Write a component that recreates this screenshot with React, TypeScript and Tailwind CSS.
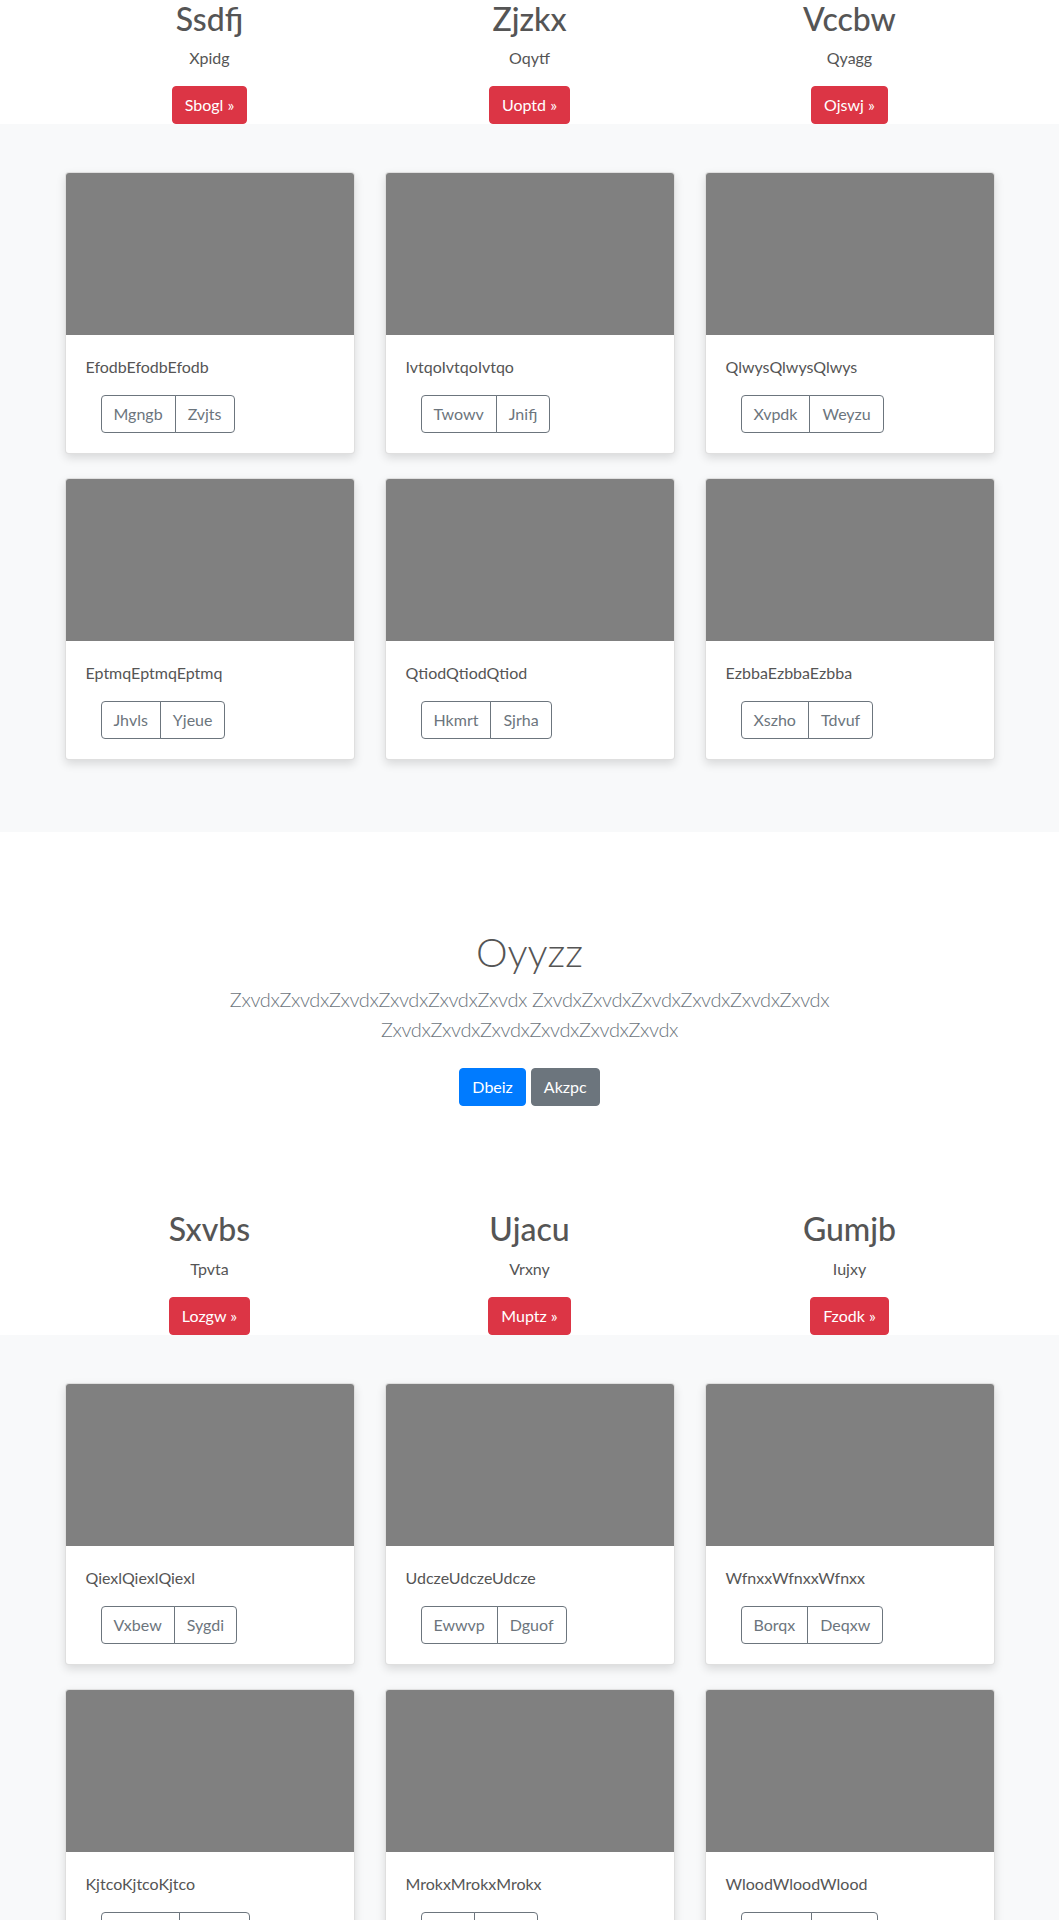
import React from 'react'

type Feature = { title: string; text: string; cta: string }
type Card = { text: string; buttons: [string, string] }

const topFeatures: Feature[] = [
  { title: 'Ssdfj', text: 'Xpidg', cta: 'Sbogl' },
  { title: 'Zjzkx', text: 'Oqytf', cta: 'Uoptd' },
  { title: 'Vccbw', text: 'Qyagg', cta: 'Ojswj' },
]

const bottomFeatures: Feature[] = [
  { title: 'Sxvbs', text: 'Tpvta', cta: 'Lozgw' },
  { title: 'Ujacu', text: 'Vrxny', cta: 'Muptz' },
  { title: 'Gumjb', text: 'Iujxy', cta: 'Fzodk' },
]

const topCards: Card[] = [
  { text: 'EfodbEfodbEfodb', buttons: ['Mgngb', 'Zvjts'] },
  { text: 'IvtqoIvtqoIvtqo', buttons: ['Twowv', 'Jnifj'] },
  { text: 'QlwysQlwysQlwys', buttons: ['Xvpdk', 'Weyzu'] },
  { text: 'EptmqEptmqEptmq', buttons: ['Jhvls', 'Yjeue'] },
  { text: 'QtiodQtiodQtiod', buttons: ['Hkmrt', 'Sjrha'] },
  { text: 'EzbbaEzbbaEzbba', buttons: ['Xszho', 'Tdvuf'] },
]

const bottomCards: Card[] = [
  { text: 'QiexlQiexlQiexl', buttons: ['Vxbew', 'Sygdi'] },
  { text: 'UdczeUdczeUdcze', buttons: ['Ewwvp', 'Dguof'] },
  { text: 'WfnxxWfnxxWfnxx', buttons: ['Borqx', 'Deqxw'] },
  { text: 'KjtcoKjtcoKjtco', buttons: ['Mqwvb', 'Hdzne'] },
  { text: 'MrokxMrokxMrokx', buttons: ['Tlijc', 'Pxsra'] },
  { text: 'WloodWloodWlood', buttons: ['Nvoxu', 'Bkrqa'] },
]

function Marketing({ items }: { items: Feature[] }) {
  return (
    <div className="w-[960px] mx-auto grid grid-cols-3">
      {items.map((f) => (
        <div key={f.title} className="px-[15px] text-center">
          <h2 className="text-[32px] font-medium leading-[1.2] mb-2">{f.title}</h2>
          <p className="mb-4">{f.text}</p>
          <a className="inline-block bg-[#dc3545] text-white rounded px-3 py-1.5 leading-6 border border-[#dc3545]">
            {f.cta} &raquo;
          </a>
        </div>
      ))}
    </div>
  )
}

function Album({ cards }: { cards: Card[] }) {
  return (
    <div className="bg-[#f8f9fa] py-12">
      <div className="w-[960px] mx-auto grid grid-cols-3">
        {cards.map((c) => (
          <div key={c.text} className="px-[15px]">
            <div className="mb-6 bg-white border border-black/[0.125] rounded shadow-[0_4px_10px_rgba(0,0,0,0.13)]">
              <div className="h-[162px] bg-[#808080] rounded-t-[3px]" />
              <div className="p-5">
                <p className="mb-4">{c.text}</p>
                <div className="ml-[15px] inline-flex">
                  <button className="border border-[#6c757d] text-[#6c757d] rounded-l px-3 py-1.5 leading-6">
                    {c.buttons[0]}
                  </button>
                  <button className="-ml-px border border-[#6c757d] text-[#6c757d] rounded-r px-3 py-1.5 leading-6">
                    {c.buttons[1]}
                  </button>
                </div>
              </div>
            </div>
          </div>
        ))}
      </div>
    </div>
  )
}

function Jumbotron() {
  const word = 'ZxvdxZxvdxZxvdxZxvdxZxvdxZxvdx'
  return (
    <section className="bg-white py-24 text-center">
      <div className="w-[960px] mx-auto px-[15px]">
        <h1 className="text-[40px] font-light leading-[1.2] mb-2">Oyyzz</h1>
        <p className="text-[20px] font-light leading-[1.5] tracking-[-0.4px] text-[#6c757d] mb-4 max-w-[640px] mx-auto">
          {word} {word} {word}
        </p>
        <div className="flex justify-center gap-[5px] py-2">
          <a className="inline-block bg-[#007bff] border border-[#007bff] text-white rounded px-3 py-1.5 leading-6">Dbeiz</a>
          <a className="inline-block bg-[#6c757d] border border-[#6c757d] text-white rounded px-3 py-1.5 leading-6">Akzpc</a>
        </div>
      </div>
    </section>
  )
}

export default function App() {
  return (
    <div className="font-['Lato','Liberation_Sans',sans-serif] text-base leading-6 text-[#555] bg-white">
      <Marketing items={topFeatures} />
      <Album cards={topCards} />
      <Jumbotron />
      <Marketing items={bottomFeatures} />
      <Album cards={bottomCards} />
    </div>
  )
}
